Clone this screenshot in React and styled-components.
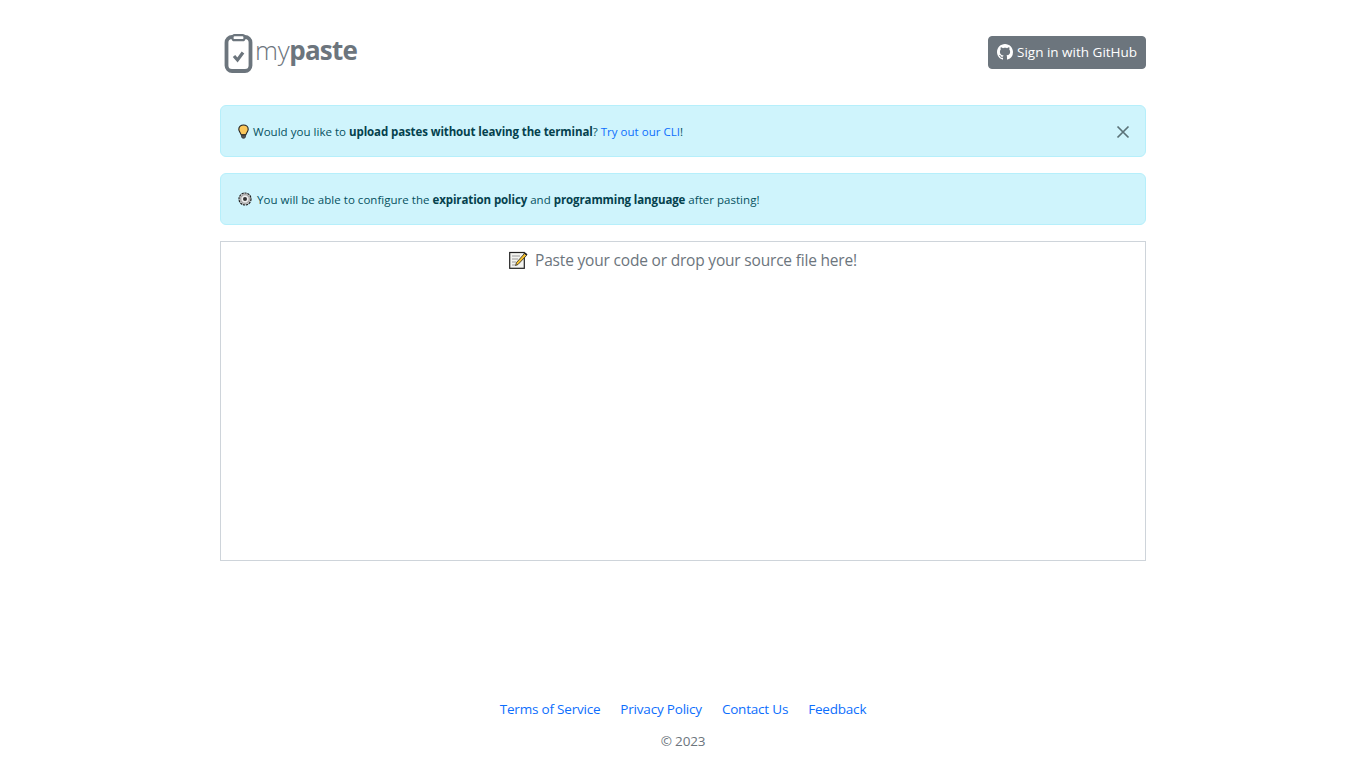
import React from "react";
import styled, { createGlobalStyle } from "styled-components";

const Global = createGlobalStyle`
  html, body { margin: 0; padding: 0; background: #fff; }
  body { font-family: "Open Sans", "Noto Sans", sans-serif; color: #212529; }
`;

const Page = styled.div`
  width: 926px;
  margin: 0 auto;
  height: 768px;
  display: flex;
  flex-direction: column;
`;

const Header = styled.header`
  display: flex;
  align-items: center;
  justify-content: space-between;
  height: 105px;
`;

const Logo = styled.div`
  display: flex;
  align-items: center;
  gap: 2px;
  padding-left: 4px;
  color: #6c757d;
  font-family: "Open Sans", sans-serif;
  font-size: 26px;
  letter-spacing: -0.3px;
  line-height: 1;
  b { font-weight: 700; letter-spacing: -0.8px; }
`;

const Wordmark = styled.span`
  font-weight: 300;
  margin-bottom: 6px;
`;

const GithubButton = styled.button`
  display: flex;
  align-items: center;
  gap: 4px;
  width: 158px;
  height: 33px;
  padding: 0 0 2px 8px;
  border: 1px solid #6c757d;
  border-radius: 4px;
  background: #6c757d;
  color: #fff;
  font-family: "Open Sans", sans-serif;
  font-size: 13.5px;
  white-space: nowrap;
`;

const Alert = styled.div`
  display: flex;
  align-items: center;
  justify-content: space-between;
  box-sizing: border-box;
  height: 52px;
  margin-bottom: 16px;
  padding: 0 15px 0 17px;
  border: 1px solid #b6effb;
  border-radius: 6px;
  background: #cff4fc;
  color: #055160;
  font-size: 11.5px;
  letter-spacing: 0.03px;
  b { font-weight: 700; color: #04414d; letter-spacing: -0.11px; }
  a { color: #0d6efd; text-decoration: none; }
`;

const AlertText = styled.div`
  display: flex;
  align-items: center;
  white-space: pre;
`;

const EmojiSlot = styled.span`
  display: inline-flex;
  margin-right: ${(p) => p.$gap}px;
`;

const Close = styled.button`
  display: flex;
  width: 14px;
  height: 14px;
  padding: 0;
  margin-top: 2px;
  border: 0;
  background: none;
`;

const DropZone = styled.div`
  box-sizing: border-box;
  height: 320px;
  border: 1px solid #ced4da;
  display: flex;
  justify-content: center;
  padding-top: 6px;
`;

const Placeholder = styled.div`
  display: flex;
  align-items: center;
  height: 24px;
  gap: 7px;
  color: #6c757d;
  font-size: 15.5px;
  letter-spacing: -0.19px;
  line-height: 24px;
`;

const Footer = styled.footer`
  margin-top: auto;
  padding-bottom: 17px;
  text-align: center;
  font-size: 13.5px;
  letter-spacing: -0.2px;
`;

const FooterLinks = styled.nav`
  display: flex;
  justify-content: center;
  gap: 20px;
  margin-bottom: 12px;
  line-height: 20px;
  a { color: #0d6efd; text-decoration: none; }
`;

const Copyright = styled.div`
  color: #6c757d;
  line-height: 20px;
`;

const ClipboardLogo = () => (
  <svg width="29" height="40" viewBox="0 0 29 40" fill="none">
    <rect x="2.500" y="4" width="24" height="34" rx="5.500" stroke="#6c757d" strokeWidth="3.800" />
    <rect x="8.500" y="2.200" width="12" height="5" rx="2" fill="#fff" stroke="#6c757d" strokeWidth="2.200" />
    <path d="M10 23l3.500 4 5.500-7.500" stroke="#6c757d" strokeWidth="3.200" />
  </svg>
);

const GithubIcon = () => (
  <svg width="16" height="16" viewBox="0 0 16 16" fill="#fff">
    <path d="M8 0C3.58 0 0 3.58 0 8c0 3.54 2.29 6.53 5.47 7.59.4.07.55-.17.55-.38 0-.19-.01-.82-.01-1.49-2.01.37-2.53-.49-2.69-.94-.09-.23-.48-.94-.82-1.13-.28-.15-.68-.52-.01-.53.63-.01 1.08.58 1.23.82.72 1.21 1.87.87 2.33.66.07-.52.28-.87.51-1.07-1.78-.2-3.64-.89-3.64-3.95 0-.87.31-1.59.82-2.15-.08-.2-.36-1.02.08-2.12 0 0 .67-.21 2.2.82.64-.18 1.32-.27 2-.27s1.36.09 2 .27c1.53-1.04 2.2-.82 2.2-.82.44 1.1.16 1.92.08 2.12.51.56.82 1.27.82 2.15 0 3.07-1.87 3.75-3.65 3.95.29.25.54.73.54 1.48 0 1.07-.01 1.93-.01 2.2 0 .21.15.46.55.38A8.01 8.01 0 0 0 16 8c0-4.42-3.58-8-8-8z" />
  </svg>
);

const BulbIcon = () => (
  <svg width="11" height="15" viewBox="0 0 11 15">
    <path d="M5.500 1C2.800 1 .8 2.800.8 5.200c0 2 1.600 3.200 2.300 5.500h4.800c.7-2.300 2.300-3.500 2.300-5.500C10.200 2.800 8.200 1 5.500 1z" fill="#fbc75a" stroke="#222" strokeWidth="1.100" />
    <path d="M3.500 11h4v2l-1 1.200h-2l-1-1.200z" fill="#555" stroke="#222" strokeWidth=".6" />
  </svg>
);

const GearIcon = () => (
  <svg width="14" height="14" viewBox="0 0 14 14">
    <circle cx="7" cy="7" r="6" fill="#ccc" stroke="#222" strokeWidth="1.200" strokeDasharray="2.200 .8" />
    <circle cx="7" cy="7" r="4.200" fill="#eee" stroke="#666" strokeWidth=".6" />
    <circle cx="7" cy="7" r="2" fill="#333" />
  </svg>
);

const MemoIcon = () => (
  <svg width="19" height="18" viewBox="0 0 19 18">
    <rect x=".7" y="1.500" width="14.600" height="15.800" fill="#f4f4f0" stroke="#222" strokeWidth="1.200" />
    <path d="M3 5h8M3 8h6M3 11h4M3 14h3" stroke="#9a9a9a" strokeWidth="1" />
    <path d="M6.500 14.500l1-3L15.500 2.500l2 2-8.500 9z" fill="#f6c12e" stroke="#222" strokeWidth=".8" />
    <path d="M15.500 2.500l1-1 2 2-1 1z" fill="#222" />
  </svg>
);

export default function App() {
  return (
    <>
      <Global />
      <Page>
        <Header>
          <Logo>
            <ClipboardLogo />
            <Wordmark>my<b>paste</b></Wordmark>
          </Logo>
          <GithubButton><GithubIcon />Sign in with GitHub</GithubButton>
        </Header>
        <Alert>
          <AlertText>
            <EmojiSlot $gap={4}><BulbIcon /></EmojiSlot>
            <span>Would you like to <b>upload pastes without leaving the terminal</b>? <a href="#cli">Try out our CLI</a>!</span>
          </AlertText>
          <Close aria-label="Close">
            <svg width="14" height="14" viewBox="0 0 14 14"><path d="M1.500 1.500l11 11M12.500 1.500l-11 11" stroke="#5b7278" strokeWidth="1.700" /></svg>
          </Close>
        </Alert>
        <Alert>
          <AlertText>
            <EmojiSlot $gap={5}><GearIcon /></EmojiSlot>
            <span>You will be able to configure the <b>expiration policy</b> and <b>programming language</b> after pasting!</span>
          </AlertText>
        </Alert>
        <DropZone>
          <Placeholder><MemoIcon /><span>Paste your code or drop your source file here!</span></Placeholder>
        </DropZone>
        <Footer>
          <FooterLinks>
            <a href="#tos">Terms of Service</a>
            <a href="#privacy">Privacy Policy</a>
            <a href="#contact">Contact Us</a>
            <a href="#feedback">Feedback</a>
          </FooterLinks>
          <Copyright>© 2023</Copyright>
        </Footer>
      </Page>
    </>
  );
}
